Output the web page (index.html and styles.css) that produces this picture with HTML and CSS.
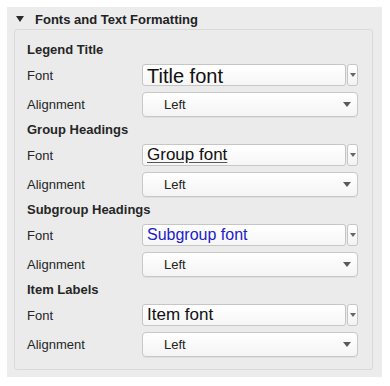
FILE: index.html
```html
<!DOCTYPE html>
<html lang="en">
<head>
  <meta charset="UTF-8" />
  <meta name="viewport" content="width=device-width, initial-scale=1" />
  <title>Fonts and Text Formatting</title>
  <link rel="stylesheet" href="styles.css">
</head>
<body>

  <div class="panel">
    <div class="panel-title">
      <span class="disclosure"></span>
      Fonts and Text Formatting
    </div>

    <div class="group-box">

      <section class="block">
        <h3>Legend Title</h3>
        <div class="row">
          <label>Font</label>
          <div class="font-combo">
            <div class="font-field title-font">Title font</div>
            <div class="font-drop"><span class="arrow small"></span></div>
          </div>
        </div>
        <div class="row">
          <label>Alignment</label>
          <div class="select">Left <span class="arrow"></span></div>
        </div>
      </section>

      <section class="block">
        <h3>Group Headings</h3>
        <div class="row">
          <label>Font</label>
          <div class="font-combo">
            <div class="font-field group-font"><u>Group font</u></div>
            <div class="font-drop"><span class="arrow small"></span></div>
          </div>
        </div>
        <div class="row">
          <label>Alignment</label>
          <div class="select">Left <span class="arrow"></span></div>
        </div>
      </section>

      <section class="block">
        <h3>Subgroup Headings</h3>
        <div class="row">
          <label>Font</label>
          <div class="font-combo">
            <div class="font-field subgroup-font">Subgroup font</div>
            <div class="font-drop"><span class="arrow small"></span></div>
          </div>
        </div>
        <div class="row">
          <label>Alignment</label>
          <div class="select">Left <span class="arrow"></span></div>
        </div>
      </section>

      <section class="block">
        <h3>Item Labels</h3>
        <div class="row">
          <label>Font</label>
          <div class="font-combo">
            <div class="font-field item-font">Item font</div>
            <div class="font-drop"><span class="arrow small"></span></div>
          </div>
        </div>
        <div class="row">
          <label>Alignment</label>
          <div class="select">Left <span class="arrow"></span></div>
        </div>
      </section>

    </div>
  </div>

</body>
</html>
```

FILE: styles.css
```css
* {
  box-sizing: border-box;
  margin: 0;
  padding: 0;
}

body {
  font-family: 'Liberation Sans', Arial, sans-serif;
  font-size: 13px;
  color: #262626;
  background: #ffffff;
  padding: 7px 8px 9px 7px;
}

.panel {
  background: #ececec;
  height: 370px;
  padding: 0 9px 7px 7px;
}

.panel-title {
  height: 22px;
  display: flex;
  align-items: center;
  padding: 2px 0 0 2px;
  font-weight: bold;
  font-size: 13px;
  color: #222;
}

.disclosure {
  width: 0;
  height: 0;
  border-left: 4.5px solid transparent;
  border-right: 4.5px solid transparent;
  border-top: 6px solid #2b2b2b;
  margin-right: 11px;
}

.group-box {
  border: 1px solid #d9d9d9;
  border-radius: 3px;
  background: #ebebeb;
  padding: 10px 14px 0 12px;
  height: 341px;
}

.block {
  height: 80px;
}

.block h3 {
  font-size: 13px;
  font-weight: bold;
  line-height: 20px;
  height: 20px;
  color: #262626;
}

.row {
  display: flex;
  align-items: center;
}

.row label {
  width: 115px;
  flex-shrink: 0;
}

.block .row:nth-of-type(1) {
  margin-top: 4px;
  height: 22px;
}

.block .row:nth-of-type(2) {
  margin-top: 6px;
  height: 25px;
}

.font-combo {
  display: flex;
  height: 22px;
  width: 216px;
}

.font-field {
  flex: 1;
  height: 22px;
  background: linear-gradient(#ffffff, #f6f6f6);
  border: 1px solid #c6c6c6;
  border-radius: 3px;
  padding-left: 4px;
  color: #111;
  display: flex;
  align-items: center;
  overflow: hidden;
  white-space: nowrap;
}

.title-font {
  font-size: 20px;
  padding-top: 3px;
}

.group-font {
  font-size: 17px;
}

.group-font u {
  text-decoration-color: #555;
  text-underline-offset: 2px;
}

.subgroup-font {
  font-size: 16px;
  color: #2020cc;
}

.item-font {
  font-size: 17px;
}

.font-drop {
  width: 11px;
  margin-left: 1px;
  height: 22px;
  border: 1px solid #c6c6c6;
  border-radius: 3px;
  background: linear-gradient(#ffffff, #f3f3f3);
  display: flex;
  align-items: center;
  justify-content: center;
}

.select {
  width: 216px;
  height: 25px;
  background: linear-gradient(#ffffff, #f4f4f4);
  border: 1px solid #c8c8c8;
  border-radius: 4px;
  box-shadow: 0 1px 0 rgba(0, 0, 0, 0.05);
  padding-left: 21px;
  padding-right: 6px;
  display: flex;
  align-items: center;
  justify-content: space-between;
  font-size: 13px;
  color: #222;
}

.arrow {
  width: 0;
  height: 0;
  border-left: 4px solid transparent;
  border-right: 4px solid transparent;
  border-top: 5px solid #5a5a5a;
}

.arrow.small {
  border-left-width: 3px;
  border-right-width: 3px;
  border-top-width: 4px;
  border-top-color: #666;
}
```
